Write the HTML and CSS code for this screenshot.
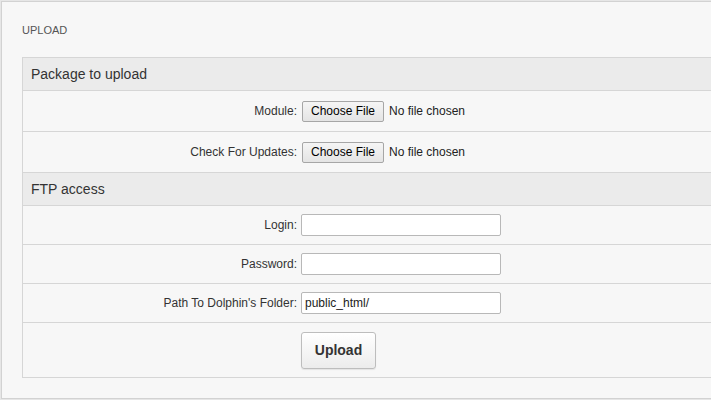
FILE: index.html
```html
<!DOCTYPE html>
<html>
<head>
<meta charset="utf-8">
<link rel="stylesheet" href="styles.css">
</head>
<body>
<div class="panel">
  <div class="panel-title">UPLOAD</div>
  <div class="form">
    <div class="section-head">Package to upload</div>
    <div class="row row-file">
      <div class="label">Module:</div>
      <div class="value"><button class="file-btn" type="button">Choose File</button><span class="file-name">No file chosen</span></div>
    </div>
    <div class="row row-file">
      <div class="label">Check For Updates:</div>
      <div class="value"><button class="file-btn" type="button">Choose File</button><span class="file-name">No file chosen</span></div>
    </div>
    <div class="section-head">FTP access</div>
    <div class="row">
      <div class="label">Login:</div>
      <div class="value"><input class="text" type="text" value=""></div>
    </div>
    <div class="row">
      <div class="label">Password:</div>
      <div class="value"><input class="text" type="password" value=""></div>
    </div>
    <div class="row">
      <div class="label">Path To Dolphin's Folder:</div>
      <div class="value"><input class="text" type="text" value="public_html/"></div>
    </div>
    <div class="row row-submit">
      <div class="label"></div>
      <div class="value"><button class="submit" type="button">Upload</button></div>
    </div>
  </div>
</div>
</body>
</html>
```

FILE: styles.css
```css
html, body {
  margin: 0;
  padding: 0;
  overflow: hidden;
  background: #e6e6e6;
  font-family: "Liberation Sans", Arial, sans-serif;
}

.panel {
  margin: 1px 0 0 1px;
  background: #f7f7f7;
  border: 1px solid #d2d2d2;
  border-right: none;
  padding: 0 0 20px 0;
}

.panel-title {
  height: 55px;
  display: flex;
  align-items: center;
  padding-left: 20px;
  font-size: 11px;
  color: #555;
}

.form {
  margin-left: 20px;
  border: 1px solid #d6d6d6;
  border-right: none;
  border-bottom: none;
}

.section-head {
  height: 32px;
  display: flex;
  align-items: center;
  padding-left: 8px;
  background: #ebebeb;
  border-bottom: 1px solid #d6d6d6;
  font-size: 14px;
  color: #333;
}

.row {
  display: grid;
  grid-template-columns: 278px 1fr;
  height: 38px;
  border-bottom: 1px solid #d6d6d6;
  font-size: 12px;
  color: #333;
}

.row-file {
  height: 40px;
}

.row-submit {
  height: 54px;
}

.label {
  display: flex;
  align-items: center;
  justify-content: flex-end;
  padding-right: 4px;
}

.value {
  display: flex;
  align-items: center;
}

.file-btn {
  box-sizing: border-box;
  width: 82px;
  height: 21px;
  margin: 0 0 0 1px;
  padding: 0;
  font-family: "Liberation Sans", Arial, sans-serif;
  font-size: 12px;
  color: #000;
  background: linear-gradient(#f5f5f5, #e4e4e4);
  border: 1px solid #a6a6a6;
  border-radius: 2px;
}

.file-name {
  margin-left: 5px;
  font-size: 12px;
  color: #222;
}

.text {
  box-sizing: border-box;
  width: 200px;
  height: 22px;
  margin: 0;
  padding: 1px 3px;
  font-family: "Liberation Sans", Arial, sans-serif;
  font-size: 12px;
  color: #222;
  background: #fff;
  border: 1px solid #b8b8b8;
  border-radius: 2px;
  outline: none;
}

.submit {
  box-sizing: border-box;
  width: 75px;
  height: 37px;
  margin: 0;
  padding: 0;
  font-family: "Liberation Sans", Arial, sans-serif;
  font-size: 14px;
  font-weight: bold;
  color: #333;
  background: linear-gradient(#ffffff, #ececec);
  border: 1px solid #bdbdbd;
  border-radius: 3px;
  box-shadow: 0 1px 1px rgba(0,0,0,0.08);
}
```
